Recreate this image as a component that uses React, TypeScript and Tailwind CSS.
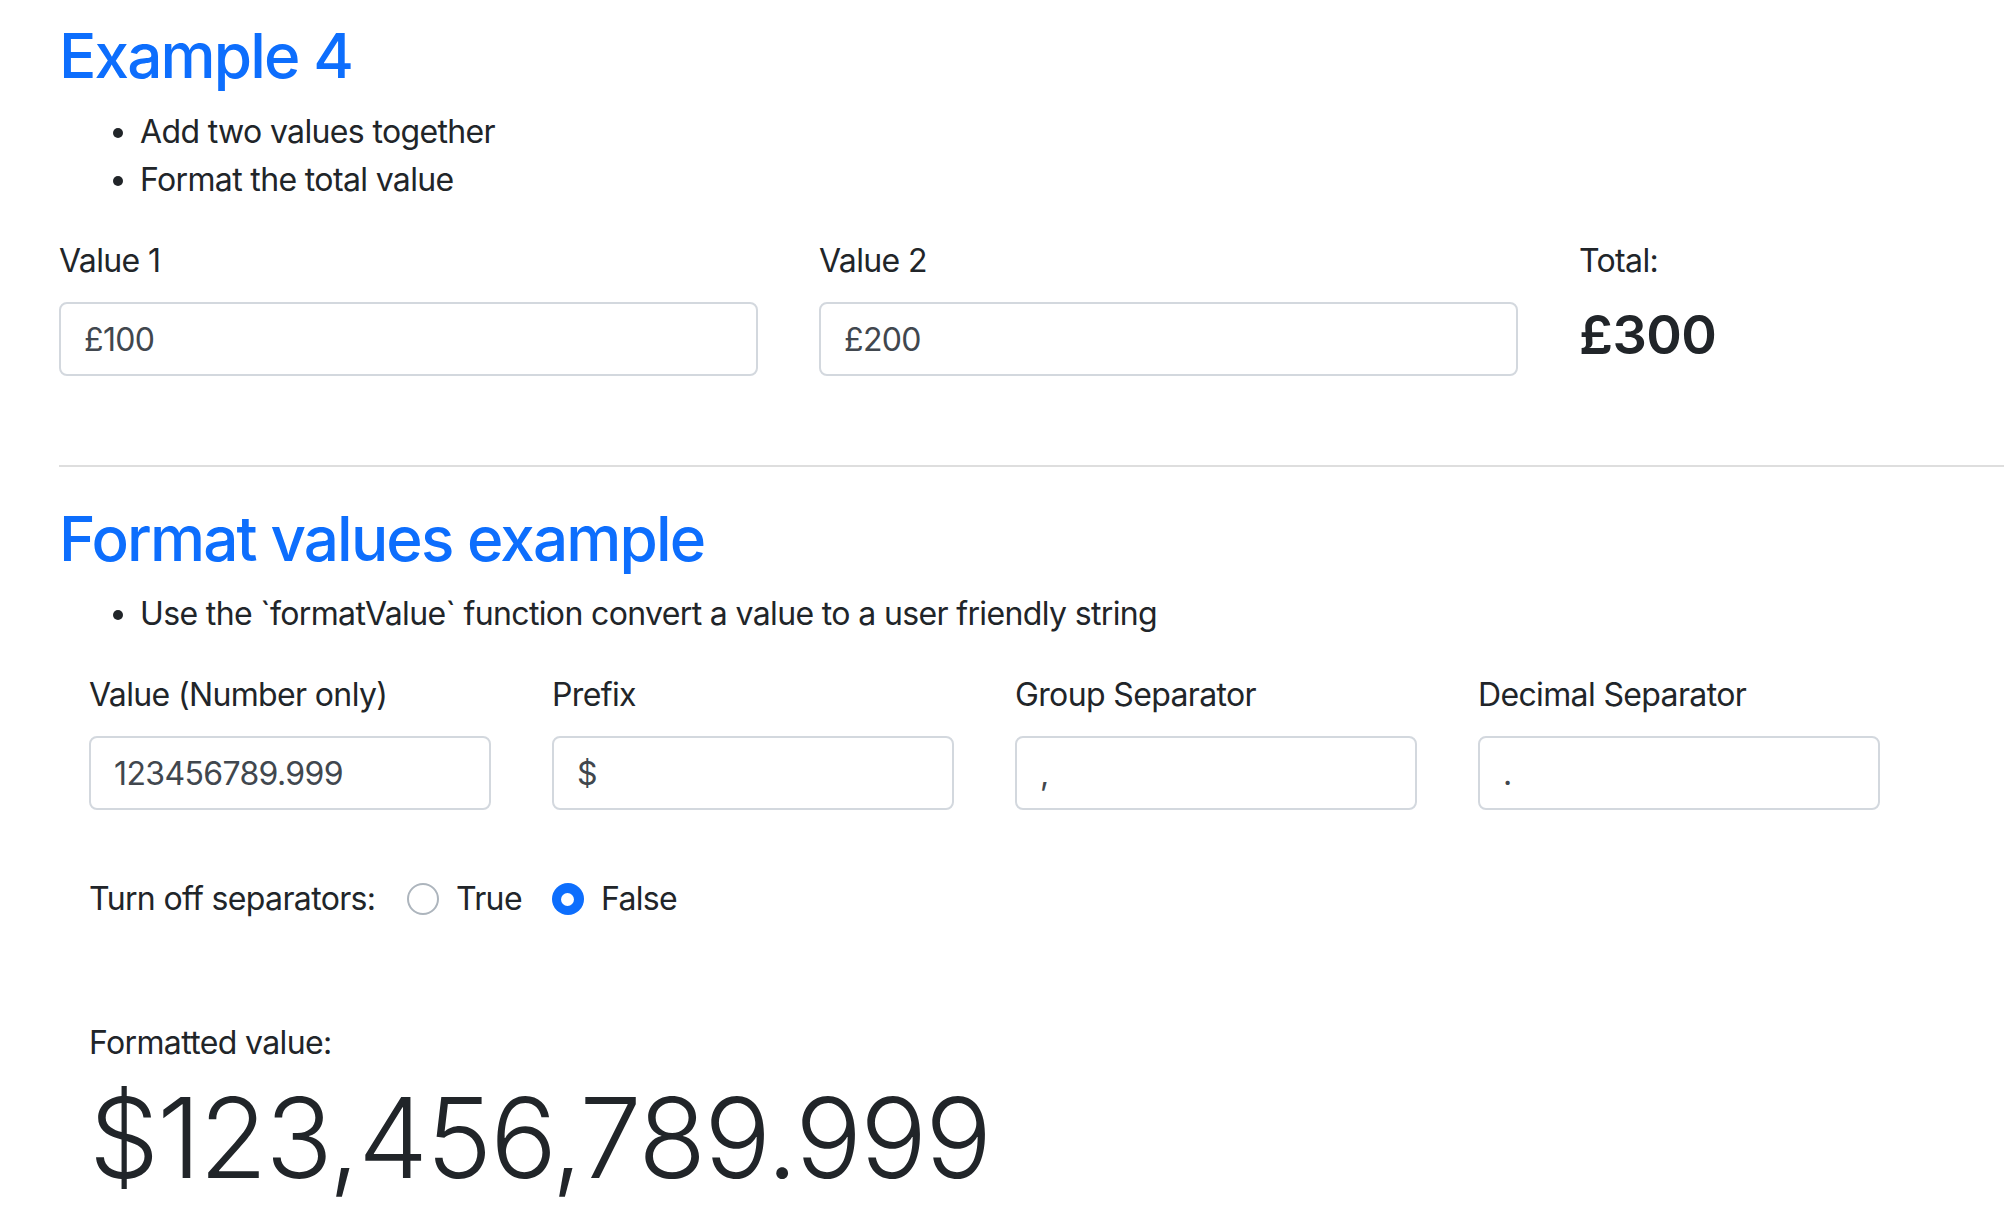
import React from "react";

function Field({ label, value }: { label: string; value: string }) {
  return (
    <div className="flex flex-col">
      <label className="block leading-[48px]">{label}</label>
      <input
        readOnly
        value={value}
        className="mt-[17px] block w-full h-[74px] rounded-[8px] border-2 border-[#d3d8de] bg-white px-[23px] py-[11px] leading-[48px] text-[32px] text-[#41474e] outline-none"
      />
    </div>
  );
}

export default function App() {
  return (
    <div className="w-full min-h-screen overflow-hidden bg-white font-['Inter','Liberation_Sans',sans-serif] text-[#212529] text-[32px] leading-[48px] tracking-[-0.02em]">
      <div className="w-[2400px] pl-[59px] pt-[17px] pb-[40px]">
        <h1 className="text-[62px] leading-[77px] font-medium tracking-[-0.03em] text-[#0d6efd]">Example 4</h1>
        <ul className="mt-[14px] list-disc pl-[81px]">
          <li>Add two values together</li>
          <li>Format the total value</li>
        </ul>
        <div className="mt-[33px] grid grid-cols-[699px_699px_699px] gap-x-[61px]">
          <Field label="Value 1" value="£100" />
          <Field label="Value 2" value="£200" />
          <div className="flex flex-col">
            <div className="leading-[48px]">Total:</div>
            <div className="mt-[19px] text-[54px] leading-[62px] font-semibold tracking-[-0.01em]">£300</div>
          </div>
        </div>
        <div className="mt-[89px] h-[2px] w-full bg-[#dedede]" />
        <h1 className="mt-[33px] text-[62px] leading-[77px] font-medium tracking-[-0.03em] text-[#0d6efd]">Format values example</h1>
        <ul className="mt-[13px] list-disc pl-[81px]">
          <li>Use the `formatValue` function convert a value to a user friendly string</li>
        </ul>
        <div className="pl-[30px]">
          <div className="mt-[33px] grid grid-cols-[402px_402px_402px_402px] gap-x-[61px]">
            <Field label="Value (Number only)" value="123456789.999" />
            <Field label="Prefix" value="$" />
            <Field label="Group Separator" value="," />
            <Field label="Decimal Separator" value="." />
          </div>
          <div className="mt-[65px] flex items-center leading-[48px]">
            <span className="w-[318px]">Turn off separators:</span>
            <span className="flex items-center mr-[30px]">
              <span className="block w-[32px] h-[32px] rounded-full border-2 border-[#adb5bd] bg-white" />
              <span className="ml-[17px]">True</span>
            </span>
            <span className="flex items-center">
              <span className="flex w-[32px] h-[32px] items-center justify-center rounded-full bg-[#0d6efd]">
                <span className="block w-[13px] h-[13px] rounded-full bg-white" />
              </span>
              <span className="ml-[17px]">False</span>
            </span>
          </div>
          <div className="mt-[96px] leading-[48px]">Formatted value:</div>
          <div className="mt-[4px] text-[111px] leading-[133px] font-light tracking-[-0.016em]">$123,456,789.999</div>
        </div>
      </div>
    </div>
  );
}
